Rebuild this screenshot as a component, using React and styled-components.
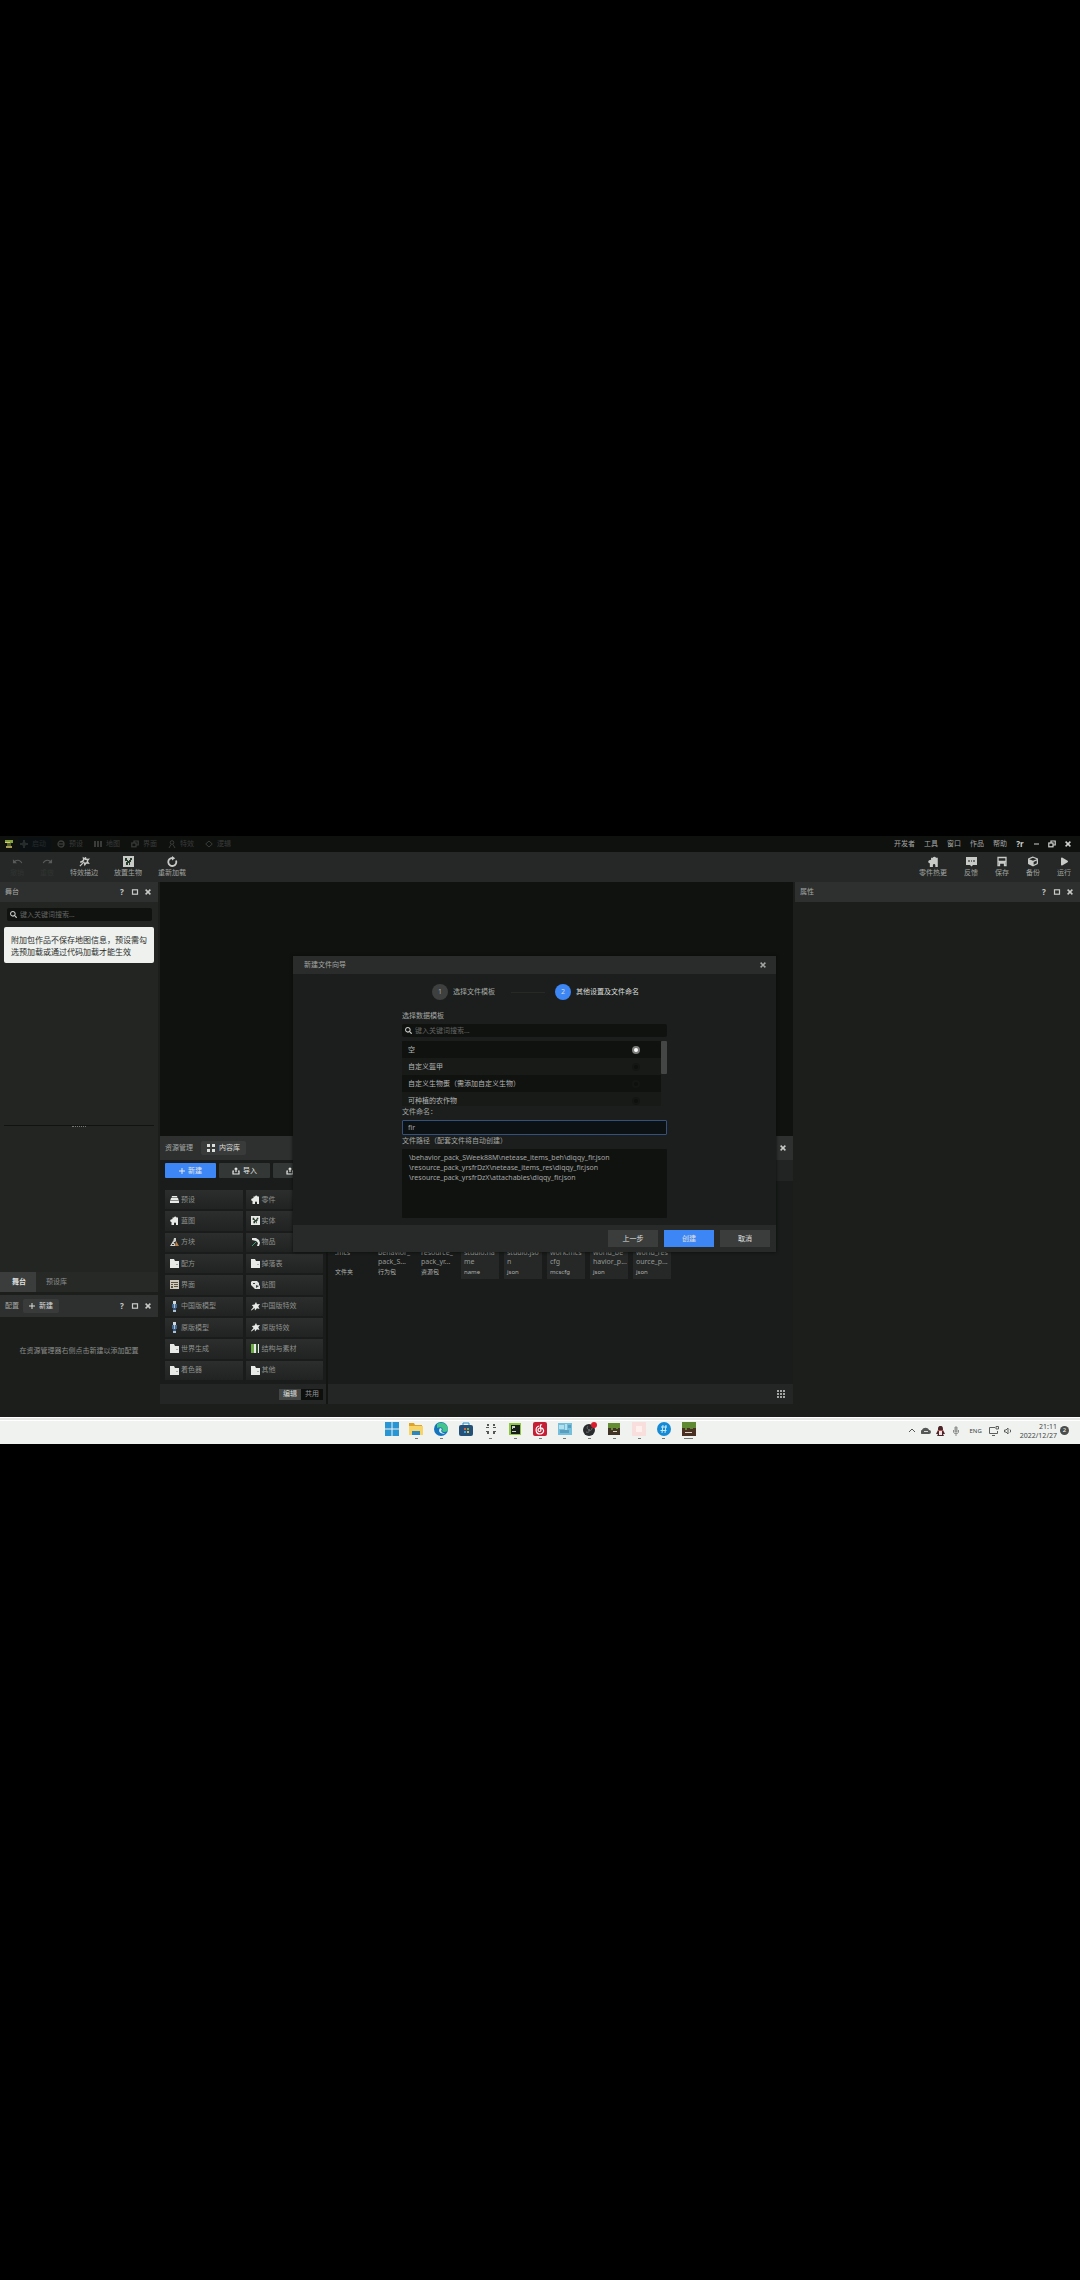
import React, { useState } from "react";
import styled, { createGlobalStyle } from "styled-components";
import { FaSearch, FaPlay, FaCube } from "react-icons/fa";
import { MdUndo, MdRedo } from "react-icons/md";

const GlobalStyle = createGlobalStyle`
  * {
    box-sizing: border-box;
  }

  body {
    margin: 0;
    background: #000000;
    color: #a4a6a4;
    font-family: "Noto Sans", "Noto Sans CJK SC", sans-serif;
    font-size: 7px;
    line-height: 10px;
  }

  button,
  input,
  textarea {
    margin: 0;
    padding: 0;
    border: 0;
    background: none;
    color: inherit;
    font: inherit;
  }

  svg {
    display: block;
    flex-shrink: 0;
  }
`;

const Page = styled.div`
  display: flex;
  flex-direction: column;
  justify-content: center;
  min-height: 100vh;
`;

const Editor = styled.div`
  position: relative;
  display: flex;
  flex-direction: column;
  padding-bottom: 13px;
  background: #1b1e1b;
`;

const MenuBar = styled.header`
  display: flex;
  justify-content: space-between;
  align-items: center;
  height: 16px;
  padding: 0 8px 0 4px;
  background: #0f110f;
`;

const Modes = styled.nav`
  display: flex;
  align-items: center;
  gap: 5px;
`;

const Mode = styled.button`
  display: flex;
  align-items: center;
  gap: 4px;
  width: 32px;
  height: 14px;
  padding-left: 1px;
  color: ${(props) => (props.$active ? "#262b2c" : "#3a3c3a")};
  background: ${(props) => (props.$active ? "#0b1113" : "transparent")};
  white-space: nowrap;
`;

const Menus = styled.nav`
  display: flex;
  align-items: center;
  gap: 9px;
`;

const MenuButton = styled.button`
  white-space: nowrap;
`;

const WindowButtons = styled.div`
  display: flex;
  align-items: center;
  gap: 8px;
  color: #d0d2d0;
`;

const ToolBar = styled.div`
  display: flex;
  justify-content: space-between;
  height: 30px;
  padding: 4px 9px 0 10px;
  background: #252826;
`;

const ToolGroup = styled.div`
  display: flex;
  gap: ${(props) => props.$gap};
`;

const Tool = styled.button`
  display: flex;
  flex-direction: column;
  align-items: center;
  gap: 1px;
  height: 24px;
  color: ${(props) => (props.$disabled ? "#585b59" : "#c8cac8")};
  white-space: nowrap;

  svg {
    height: 11px;
  }

  span {
    color: ${(props) => (props.$disabled ? "#303331" : "#a0a2a0")};
  }
`;

const Workspace = styled.main`
  display: grid;
  grid-template-columns: 158px 1fr 285px;
  gap: 2px;
  height: 522px;
`;

const Column = styled.section`
  display: flex;
  flex-direction: column;
  min-width: 0;
  min-height: 0;
`;

const PanelHeader = styled.div`
  display: flex;
  align-items: center;
  gap: ${(props) => props.$gap || "4px"};
  height: ${(props) => props.$height || "20px"};
  padding: 0 6px 0 5px;
  background: #2d302e;
`;

const PanelTools = styled.div`
  display: flex;
  align-items: center;
  gap: 5px;
  margin-left: auto;
  color: #c8cac8;
`;

const IconButton = styled.button`
  display: flex;
  align-items: center;
  justify-content: center;
  width: 8px;
  height: 10px;
  font-weight: 700;
  font-size: 8px;
`;

const StagePanel = styled.div`
  flex: 1;
  display: flex;
  flex-direction: column;
  padding: 6px 4px 0;
  background: #222522;
`;

const SearchBox = styled.label`
  display: flex;
  align-items: center;
  gap: 3px;
  height: 13px;
  margin: ${(props) => props.$margin || "0"};
  padding: 0 3px;
  border-radius: 2px;
  background: #101210;
  color: #c8cac8;

  input {
    flex: 1;
    min-width: 0;
    outline: none;
  }

  input::placeholder {
    color: #626462;
  }
`;

const Note = styled.p`
  height: 36px;
  margin: 6px 0 0;
  padding: 7px;
  border-radius: 2px;
  background: #eef1ee;
  color: #2a2c2a;
  font-size: 8px;
  line-height: 12px;
`;

const Splitter = styled.div`
  display: flex;
  justify-content: center;
  margin-top: 162px;
  border-top: 1px solid #111311;
  height: 4px;

  span {
    width: 14px;
    height: 1px;
    border-top: 1px dotted #777977;
  }
`;

const TabRow = styled.div`
  display: flex;
  height: 20px;
  margin-bottom: 3px;
  background: #262926;
`;

const Tab = styled.button`
  min-width: 36px;
  padding: 0 10px;
  background: ${(props) => (props.$active ? "#3a3d3b" : "transparent")};
  color: ${(props) => (props.$active ? "#e0e2e0" : "#8c8e8c")};
  font-weight: ${(props) => (props.$active ? 600 : 400)};
  text-align: right;
  white-space: nowrap;
`;

const ChipButton = styled.button`
  display: flex;
  align-items: center;
  gap: 4px;
  height: 14px;
  padding: 0 6px;
  border-radius: 2px;
  background: #383b39;
  color: #dcdedc;
  white-space: nowrap;
`;

const ConfigPanel = styled.div`
  display: flex;
  justify-content: center;
  height: 87px;
  padding-top: 29px;
  background: #1b1e1b;
  color: #8c8e8c;
`;

const Viewport = styled.div`
  flex: 1;
  background: #0f120f;
`;

const ResourcePanel = styled.div`
  display: grid;
  grid-template-columns: 168px 1fr;
  height: 244px;
  background: #191c1a;
`;

const Library = styled.div`
  display: flex;
  flex-direction: column;
  border-right: 2px solid #131513;
`;

const ActionRow = styled.div`
  display: flex;
  gap: 3px;
  padding: 3px 0 0 5px;
  overflow: hidden;
`;

const ActionButton = styled.button`
  display: flex;
  align-items: center;
  justify-content: center;
  gap: 3px;
  flex: 0 0 51px;
  height: 15px;
  border-radius: 1px;
  background: ${(props) => (props.$primary ? "#3d86f6" : "#333735")};
  color: #e6e8e6;
`;

const TileGrid = styled.div`
  flex: 1;
  display: grid;
  grid-template-columns: 1fr 1fr;
  grid-auto-rows: 1fr;
  gap: 2px 3px;
  padding: 12px 3px 4px 5px;
`;

const Tile = styled.button`
  display: flex;
  align-items: center;
  gap: 2px;
  padding: 0 5px;
  background: linear-gradient(#2b2e2c, #202321);
  color: #8f918f;
  white-space: nowrap;

  svg {
    color: #e8eae8;
  }
`;

const PanelFooter = styled.div`
  display: flex;
  align-items: center;
  justify-content: flex-end;
  height: 20px;
  padding-right: ${(props) => props.$inset || "3px"};
  background: #232624;
`;

const Toggle = styled.button`
  width: 22px;
  height: 11px;
  background: ${(props) => (props.$active ? "#424543" : "#0d0f0d")};
  color: ${(props) => (props.$active ? "#dcdedc" : "#969896")};
`;

const Files = styled.div`
  display: flex;
  flex-direction: column;
  min-width: 0;
`;

const FilesBar = styled.div`
  height: 21px;
  background: #212422;
`;

const FileList = styled.div`
  flex: 1;
  display: flex;
  align-items: flex-start;
  gap: 5px;
  padding: 20px 4px 0;
`;

const FileCard = styled.div`
  display: flex;
  flex-direction: column;
  width: 38px;
  height: 78px;
  padding: 47px 3px 0;
  background: ${(props) => (props.$filled ? "#252826" : "transparent")};
  color: #969896;

  p {
    height: 18px;
    margin: 0;
    line-height: 9px;
    white-space: pre;
  }

  small {
    font-size: 6px;
    line-height: 12px;
    color: #b0b2b0;
  }
`;

const PropertyPanel = styled.div`
  flex: 1;
  background: #1c1e1c;
`;

const Dialog = styled.form`
  position: absolute;
  top: 120px;
  left: calc(50% - 247px);
  display: flex;
  flex-direction: column;
  width: 483px;
  height: 296px;
  background: #1b1e1c;
  box-shadow: 0 0 3px #0a0c0a;
`;

const DialogHeader = styled.div`
  display: flex;
  align-items: center;
  justify-content: space-between;
  height: 18px;
  padding: 0 9px 0 11px;
  background: #292c2a;
`;

const Steps = styled.ol`
  display: flex;
  align-items: center;
  gap: 5px;
  height: 36px;
  margin: 0;
  padding-left: 139px;
  list-style: none;
`;

const Step = styled.li`
  display: flex;
  align-items: center;
  gap: 5px;
  color: ${(props) => (props.$active ? "#dcdedc" : "#a4a6a4")};

  b {
    width: 16px;
    height: 16px;
    border-radius: 50%;
    background: ${(props) => (props.$active ? "#3d86f6" : "#3d403e")};
    font-weight: 400;
    line-height: 16px;
    text-align: center;
  }
`;

const StepLine = styled.li`
  width: 34px;
  height: 1px;
  margin: 0 5px 0 11px;
  background: #262926;
`;

const Fields = styled.div`
  flex: 1;
  display: flex;
  flex-direction: column;
  width: 265px;
  margin-left: 109px;
`;

const FieldLabel = styled.label`
  height: 12px;
  line-height: 12px;
`;

const Templates = styled.div`
  display: flex;
  justify-content: space-between;
  height: 65px;
  margin-top: 4px;
  overflow: hidden;
`;

const TemplateList = styled.div`
  flex: 1;
`;

const TemplateRow = styled.label`
  display: flex;
  align-items: center;
  justify-content: space-between;
  height: 17px;
  padding: 0 21px 0 6px;
  background: #181a18;
  color: #b4b6b4;

  &:nth-child(odd) {
    background: #101210;
  }

  input {
    appearance: none;
    width: 8px;
    height: 8px;
    border: 2px solid #141614;
    border-radius: 50%;
    background: #0e100e;
  }

  input:checked {
    border-color: #7c7e7c;
    background: #ffffff;
  }
`;

const ScrollThumb = styled.div`
  width: 6px;
  height: 33px;
  border-radius: 1px;
  background: #434644;
`;

const NameInput = styled.input`
  height: 15px;
  margin-top: 2px;
  padding: 0 5px;
  border: 1px solid #33517c;
  border-radius: 1px;
  background: #0c1114;
  outline: none;
`;

const Paths = styled.textarea`
  height: 69px;
  margin-top: 2px;
  padding: 4px 7px;
  border-radius: 1px;
  background: #101210;
  line-height: 10px;
  outline: none;
  overflow: hidden;
  resize: none;
`;

const DialogFooter = styled.div`
  display: flex;
  align-items: center;
  justify-content: flex-end;
  gap: 6px;
  height: 27px;
  padding-right: 6px;
  background: #272a28;
`;

const DialogButton = styled.button`
  width: 50px;
  height: 17px;
  background: ${(props) => (props.$primary ? "#3d86f6" : "#3a3d3b")};
  color: #e0e2e0;
`;

const TaskBar = styled.footer`
  display: grid;
  grid-template-columns: 1fr 311px 1fr;
  align-items: center;
  height: 27px;
  background: #eff2ef;
  box-shadow: inset 0 1px #ffffff, inset 0 3px #e4e7e4, inset 0 4px #ffffff;
  color: #444644;
`;

const Apps = styled.div`
  grid-column: 2;
  display: flex;
  justify-content: space-between;
`;

const AppButton = styled.button`
  display: flex;
  flex-direction: column;
  align-items: center;
  gap: 2px;
  width: 14px;

  &::after {
    content: "";
    width: ${(props) => props.$mark};
    height: 1px;
    background: #777977;
  }
`;

const Tray = styled.div`
  display: flex;
  align-items: center;
  justify-content: flex-end;
  gap: 5px;
  padding-right: 11px;
`;

const Language = styled.span`
  margin: 0 2px;
  font-size: 6px;
`;

const Clock = styled.time`
  margin-left: 3px;
  line-height: 9px;
  text-align: right;
`;

const Badge = styled.span`
  width: 9px;
  height: 9px;
  margin-left: -2px;
  border-radius: 50%;
  background: #4a4d4b;
  color: #ffffff;
  font-size: 6px;
  line-height: 9px;
  text-align: center;
`;

const CloseIcon = () => (
  <svg width="8" height="8" viewBox="0 0 8 8" stroke="currentColor" strokeWidth="1.5">
    <path d="M1.6 1.6 6.4 6.4M6.4 1.6 1.6 6.4" />
  </svg>
);

const SquareIcon = () => (
  <svg width="8" height="8" viewBox="0 0 8 8" fill="none" stroke="currentColor" strokeWidth="1.2">
    <rect x="1.5" y="1.8" width="5" height="4.4" />
  </svg>
);

const RestoreIcon = () => (
  <svg width="8" height="8" viewBox="0 0 8 8" fill="none" stroke="currentColor" strokeWidth="1.2">
    <rect x="0.8" y="3" width="4.2" height="3.8" />
    <path d="M3 3V1h4.2v4H5" />
  </svg>
);

const PlusIcon = () => (
  <svg width="6" height="6" viewBox="0 0 6 6" stroke="currentColor">
    <path d="M3 0v6M0 3h6" />
  </svg>
);

const PlayModeIcon = () => (
  <svg width="8" height="8" viewBox="0 0 8 8" fill="currentColor">
    <path d="M3 0h2v2l1 1h2v2H6L5 6v2H3V6L2 5H0V3h2l1-1z" />
  </svg>
);

const GearIcon = () => (
  <svg width="8" height="8" viewBox="0 0 8 8" fill="none" stroke="currentColor" strokeWidth="1.3">
    <circle cx="4" cy="4" r="3" />
    <path d="M1 4h6" />
  </svg>
);

const MapIcon = () => (
  <svg width="8" height="8" viewBox="0 0 8 8" fill="currentColor">
    <path d="M0 1h2v6H0zM3 1h2v6H3zM6 1h2v6H6z" />
  </svg>
);

const PersonIcon = () => (
  <svg width="8" height="8" viewBox="0 0 8 8" fill="none" stroke="currentColor">
    <circle cx="4" cy="2.500" r="1.800" />
    <path d="M1 8 3 4.500M7 8 5 4.500" />
  </svg>
);

const DiamondIcon = () => (
  <svg width="8" height="8" viewBox="0 0 8 8" fill="none" stroke="currentColor">
    <path d="M4 1 7.300 4 4 7 .7 4z" />
  </svg>
);

const TransferIcon = () => (
  <svg width="8" height="8" viewBox="0 0 8 8" fill="none" stroke="currentColor" strokeWidth="1.2">
    <path d="M4 5V1M2.6 2.4 4 1l1.4 1.4M2 4H1v3h6V4H6" />
  </svg>
);

const SparkIcon = ({ size = 10 }) => (
  <svg width={size} height={size} viewBox="0 0 10 10">
    <path
      fill="none"
      stroke="currentColor"
      strokeWidth="1.2"
      d="m5.800 1.200.6 1.900 2.300-.2-1.300 1.700 1.200 1.900-2.200-.3-1.100 1.700-.8-2.200-2.100-.6 1.800-1.200-.2-2 1.500.9z"
    />
    <path stroke="currentColor" strokeWidth="1.2" d="M3.500 6.500.8 9.200M1 5.500h1.500" />
  </svg>
);

const StarIcon = () => (
  <svg width="9" height="9" viewBox="0 0 9 9" fill="currentColor">
    <path d="m5 0 1 2.300L9 2 7.300 4.300 8.500 7 6 6.300 4 8.500 3.600 6 .5 8.500 0 8l2.500-3L.8 3 3.600 2.500z" />
  </svg>
);

const CreatureIcon = ({ size = 11 }) => (
  <svg width={size} height={size} viewBox="0 0 11 11">
    <path fill="currentColor" d="M0 0h11v11H0z" />
    <path fill="#263b2a" d="M2 2h2v2h1v1h1V4h1V2h2v2H8v2H7v3H6V7H5v2H3V6h1V5H2z" />
  </svg>
);

const RefreshIcon = () => (
  <svg width="11" height="11" viewBox="0 0 11 11">
    <path d="M9 4.500A4 4 0 1 1 5.500 2" fill="none" stroke="currentColor" strokeWidth="1.8" />
    <path d="M5 0v4.400l3.200-2.200z" fill="currentColor" />
  </svg>
);

const SaveIcon = () => (
  <svg width="10" height="10" viewBox="0 0 10 10" fill="none" stroke="currentColor" strokeWidth="1.3">
    <path d="M1 1h8v8H7.5V6.5h-5V9H1zM1 5h8" />
  </svg>
);

const FeedbackIcon = () => (
  <svg width="11" height="11" viewBox="0 0 11 11">
    <path fill="currentColor" d="M0 1h11v8H7l-1.500 1.500L4 9H0z" />
    <path fill="#6e716f" d="M2 4h2v2H2zM5 4h1v2H5zM7 4h2v2H7z" />
  </svg>
);

const GridIcon = () => (
  <svg width="8" height="8" viewBox="0 0 8 8" fill="currentColor">
    <path d="M0 0h3v3H0zM5 0h3v3H5zM0 5h3v3H0zM5 5h3v3H5z" />
  </svg>
);

const SmallGridIcon = () => (
  <svg width="8" height="8" viewBox="0 0 8 8" fill="currentColor">
    <path d="M0 0h2v2H0zM3 0h2v2H3zM6 0h2v2H6zM0 3h2v2H0zM3 3h2v2H3zM6 3h2v2H6zM0 6h2v2H0zM3 6h2v2H3zM6 6h2v2H6z" />
  </svg>
);

const LogoIcon = () => (
  <svg width="10" height="9" viewBox="0 0 10 9">
    <path fill="#86a23a" d="M1 0h8v3H1z" />
    <path fill="#d3cd68" d="M1 2h5v1H1z" />
    <path fill="#51602a" d="M3 3h4v3H3z" />
    <path fill="#a89d58" d="M2 6h6v2H2z" />
  </svg>
);

const PresetIcon = () => (
  <svg width="9" height="9" viewBox="0 0 9 9" fill="currentColor">
    <path d="M2 1h5l.5 1.5h-6zM1 3h7l.6 2H.4zM0 5.5h9V8H0z" />
  </svg>
);

const PieceIcon = ({ size = 9 }) => (
  <svg width={size} height={size} viewBox="0 0 9 9" fill="currentColor">
    <path
      fillRule="evenodd"
      d="M4 1.500a1.300 1.300 0 0 1 2.500 0H8V9H6V7.500a1 1 0 0 0-2 0V9H1.500V6A1.300 1.300 0 0 1 1 3.500L2.500 3V1.500z"
    />
  </svg>
);

const FolderIcon = () => (
  <svg width="9" height="9" viewBox="0 0 9 9">
    <path fill="currentColor" d="M0 0h4l1 2h4v7H0z" />
    <path fill="#a9aba9" d="M6 5h2v1H6z" />
  </svg>
);

const BlockIcon = () => (
  <svg width="9" height="9" viewBox="0 0 9 9">
    <path fill="#cfd1cf" d="M4 0h2v3l-1 1H3zM0 8l3-5 2 3v2z" />
    <path fill="#b9814b" d="m6 3 3 5H5z" />
    <path fill="#333333" d="M2 6h2v1H2z" />
  </svg>
);

const ItemIcon = () => (
  <svg width="9" height="9" viewBox="0 0 9 9">
    <path fill="#e8eae8" d="M1 0h4l3 2 1 3-1 3H6l1-3-2-2-4-1z" />
    <path stroke="#3d9a71" d="M5.5 3.5 1 8" />
  </svg>
);

const ScreenIcon = () => (
  <svg width="9" height="9" viewBox="0 0 9 9">
    <path fill="#cfcabc" d="M0 0h9v9H0z" />
    <path fill="#5a5040" d="M1 2h7v1H1zM1 4h2v1H1zM4 4h4v1H4zM1 6h2v2H1zM4 6h4v1H4z" />
  </svg>
);

const TextureIcon = () => (
  <svg width="9" height="9" viewBox="0 0 9 9">
    <path fill="#e0e2e0" d="M1 1h5l2 2v2l1 1v3H4L0 5V2z" />
    <path fill="#3b3f3c" d="M2 3h2v1H2zM5 5l3 1-3 2z" />
  </svg>
);

const ModelIcon = () => (
  <svg width="9" height="11" viewBox="0 0 9 11">
    <path fill="#d2dade" d="M3 0h3v3H3z" />
    <path fill="#466b92" d="M2 3h5v4H2z" />
    <path fill="#a9c1d2" d="M4 3h1v5H4zM3 9h3v2H3z" />
    <path fill="#38547a" d="M3 7h3v2H3z" />
  </svg>
);

const BookIcon = () => (
  <svg width="9" height="9" viewBox="0 0 9 9">
    <path fill="#6cab46" d="M0 0h3v9H0z" />
    <path fill="#e8eae8" d="M3 0h2v9H3zM7 0h1v9H7z" />
    <path fill="#31502b" d="M5 0h2v9H5z" />
  </svg>
);

const MobIcon = () => <CreatureIcon size={9} />;

const modes = [
  ["启动", PlayModeIcon],
  ["预设", GearIcon],
  ["地图", MapIcon],
  ["界面", RestoreIcon],
  ["特效", PersonIcon],
  ["逻辑", DiamondIcon],
];

const tiles = [
  ["预设", PresetIcon],
  ["零件", PieceIcon],
  ["蓝图", PieceIcon],
  ["实体", MobIcon],
  ["方块", BlockIcon],
  ["物品", ItemIcon],
  ["配方", FolderIcon],
  ["掉落表", FolderIcon],
  ["界面", ScreenIcon],
  ["贴图", TextureIcon],
  ["中国版模型", ModelIcon],
  ["中国版特效", StarIcon],
  ["原版模型", ModelIcon],
  ["原版特效", StarIcon],
  ["世界生成", FolderIcon],
  ["结构与素材", BookIcon],
  ["着色器", FolderIcon],
  ["其他", FolderIcon],
];

const files = [
  { name: ".mcs", type: "文件夹" },
  { name: "behavior_\npack_S...", type: "行为包" },
  { name: "resource_\npack_yr...", type: "资源包" },
  { name: "studio.na\nme", type: "name", filled: true },
  { name: "studio.jso\nn", type: "json", filled: true },
  { name: "work.mcs\ncfg", type: "mcscfg", filled: true },
  { name: "world_be\nhavior_p...", type: "json", filled: true },
  { name: "world_res\nource_p...", type: "json", filled: true },
];

const templates = ["空", "自定义盔甲", "自定义生物蛋（需添加自定义生物）", "可种植的农作物"];

const taskApps = [
  {
    name: "开始",
    mark: "0",
    art: <path fill="#2a95d3" d="M0 0h6.5v6.5H0zM7.5 0H14v6.5H7.5zM0 7.5h6.5V14H0zM7.5 7.5H14V14H7.5z" />,
  },
  {
    name: "文件资源管理器",
    mark: "3px",
    art: (
      <>
        <path fill="#dfa328" d="M0 1h5l1 2h7v4H0z" />
        <path fill="#f8d366" d="M0 4h14v9H0z" />
        <path fill="#2b87bd" d="M3 9h8v4H3z" />
      </>
    ),
  },
  {
    name: "Edge",
    mark: "3px",
    art: (
      <>
        <circle cx="7" cy="7" r="7" fill="#1574bd" />
        <path fill="#43c58a" d="M3 2a7 7 0 0 1 11 5c0 3-4 4-6 2 2-3-1-5-5-3z" />
        <path fill="#dceefa" d="M6 6c-3 4 2 7 6 5-4 1-6-2-4-4z" />
      </>
    ),
  },
  {
    name: "Microsoft Store",
    mark: "0",
    art: (
      <>
        <path fill="none" stroke="#2d91c9" d="M4 4V1h6v3" />
        <rect y="3" width="14" height="11" rx="2" fill="#255078" />
        <path fill="#d6633e" d="M5 6h2v2H5z" />
        <path fill="#89ad45" d="M8 6h2v2H8z" />
        <path fill="#3ca6d8" d="M5 9h2v2H5z" />
        <path fill="#e5bd45" d="M8 9h2v2H8z" />
      </>
    ),
  },
  {
    name: "工具",
    mark: "3px",
    art: <path fill="#555755" d="M3 2h2v2H3zM9 2h2v2H9zM2 5h3v1H2zM9 5h3v1H9zM2 9h3v1H2zM9 9h3v1H9zM3 10h2v2H3zM9 10h2v2H9z" />,
  },
  {
    name: "PyCharm",
    mark: "3px",
    art: (
      <>
        <path fill="#8ec63f" d="M1 1h12v12H1z" />
        <path fill="#172018" d="M3 3h9v9H3z" />
        <path fill="#c8d0c8" d="M4 4h3v2H5v1H4zM4 9h4v1H4z" />
      </>
    ),
  },
  {
    name: "网易云音乐",
    mark: "3px",
    art: (
      <>
        <rect width="14" height="14" rx="2" fill="#c51f35" />
        <path fill="none" stroke="#fff" strokeWidth="1.2" d="M9 3c-2-1-2 1-1 5 0 2-3 2-3 0s3-3 5-1c2 3-1 5-3 5-5 0-5-7-1-8" />
      </>
    ),
  },
  {
    name: "编辑器",
    mark: "3px",
    art: (
      <>
        <path fill="#74bfdc" d="M0 1h14v12H0z" />
        <path fill="#b4e0ee" d="M1 3h5v4H1zM7 2h2v7H7z" />
        <path fill="#5a9dbc" d="M2 8h9v3H2zM10 3h3v3h-3z" />
      </>
    ),
  },
  {
    name: "OBS",
    mark: "3px",
    art: (
      <>
        <circle cx="6" cy="8" r="6" fill="#292b2c" />
        <path fill="none" stroke="#6b6d6e" d="M5 4c-2 2 0 4 2 4M9 6c0 3-3 3-4 2M3 10c3 1 4-1 3-3" />
        <circle cx="11" cy="3" r="3" fill="#dc1c2e" />
      </>
    ),
  },
  {
    name: "我的世界",
    mark: "3px",
    art: (
      <>
        <path fill="#413326" d="M1 1h12v12H1z" />
        <path fill="#648d34" d="M1 1h12v5h-2v1H9V6H6v2H4V6H1z" />
        <path fill="#d4cfba" d="M6 9h4v1H6z" />
      </>
    ),
  },
  {
    name: "画板",
    mark: "3px",
    art: (
      <>
        <path fill="#f9dede" d="M0 0h14v14H0z" />
        <path fill="#fff0ee" d="M4 4h6v6H4z" />
      </>
    ),
  },
  {
    name: "启动器",
    mark: "3px",
    art: (
      <>
        <circle cx="7" cy="7" r="7" fill="#168bd5" />
        <path fill="none" stroke="#c6eaff" d="M4 5h6M3.5 8.5h6M6 3 5 11M9 3l-1 8" />
      </>
    ),
  },
  {
    name: "MC Studio",
    mark: "9px",
    art: (
      <>
        <path fill="#4a3022" d="M0 0h14v14H0z" />
        <path fill="#5f8a33" d="M0 0h14v6h-3v1H8V6H5v2H3V6H0z" />
        <path fill="#dcd4c6" d="M3 10h7v1H3z" />
      </>
    ),
  },
];

const PanelControls = () => (
  <PanelTools>
    <IconButton type="button" aria-label="帮助">?</IconButton>
    <IconButton type="button" aria-label="最大化"><SquareIcon /></IconButton>
    <IconButton type="button" aria-label="关闭"><CloseIcon /></IconButton>
  </PanelTools>
);

const NewFileDialog = () => {
  const [template, setTemplate] = useState(templates[0]);
  const [name, setName] = useState("fir");
  const paths = [
    `\\behavior_pack_SWeek88M\\netease_items_beh\\diqqy_${name}.json`,
    `\\resource_pack_yrsfrDzX\\netease_items_res\\diqqy_${name}.json`,
    `\\resource_pack_yrsfrDzX\\attachables\\diqqy_${name}.json`,
  ];

  return (
    <Dialog onSubmit={(event) => event.preventDefault()}>
      <DialogHeader>
        新建文件向导
        <IconButton type="button" aria-label="关闭"><CloseIcon /></IconButton>
      </DialogHeader>
      <Steps>
        <Step><b>1</b>选择文件模板</Step>
        <StepLine />
        <Step $active><b>2</b>其他设置及文件命名</Step>
      </Steps>
      <Fields>
        <FieldLabel htmlFor="template-search">选择数据模板</FieldLabel>
        <SearchBox $margin="2px 0 0">
          <FaSearch size={7} />
          <input id="template-search" placeholder="键入关键词搜索..." />
        </SearchBox>
        <Templates>
          <TemplateList>
            {templates.map((item) => (
              <TemplateRow key={item}>
                {item}
                <input
                  type="radio"
                  name="template"
                  checked={template === item}
                  onChange={() => setTemplate(item)}
                />
              </TemplateRow>
            ))}
          </TemplateList>
          <ScrollThumb />
        </Templates>
        <FieldLabel htmlFor="file-name">文件命名：</FieldLabel>
        <NameInput
          id="file-name"
          autoFocus
          value={name}
          onChange={(event) => setName(event.target.value)}
        />
        <FieldLabel htmlFor="file-paths">文件路径（配套文件将自动创建）</FieldLabel>
        <Paths id="file-paths" readOnly value={paths.join("\n")} />
      </Fields>
      <DialogFooter>
        <DialogButton type="button">上一步</DialogButton>
        <DialogButton $primary>创建</DialogButton>
        <DialogButton type="button">取消</DialogButton>
      </DialogFooter>
    </Dialog>
  );
};

const App = () => (
  <Page>
    <GlobalStyle />
    <Editor>
      <MenuBar>
        <Modes>
          <LogoIcon />
          {modes.map(([name, Icon], index) => (
            <Mode key={name} $active={index === 0}>
              <Icon />
              {name}
            </Mode>
          ))}
        </Modes>
        <Menus>
          {["开发者", "工具", "窗口", "作品", "帮助"].map((name) => (
            <MenuButton key={name}>{name}</MenuButton>
          ))}
          <WindowButtons>
            <IconButton>?r</IconButton>
            <IconButton aria-label="最小化">
              <svg width="8" height="8" viewBox="0 0 8 8" fill="currentColor">
                <path d="M2 3.5h5v1H2z" />
              </svg>
            </IconButton>
            <IconButton aria-label="还原"><RestoreIcon /></IconButton>
            <IconButton aria-label="关闭"><CloseIcon /></IconButton>
          </WindowButtons>
        </Menus>
      </MenuBar>
      <ToolBar>
        <ToolGroup $gap="16px">
          <Tool $disabled><MdUndo size={11} /><span>撤销</span></Tool>
          <Tool $disabled><MdRedo size={11} /><span>重做</span></Tool>
          <Tool><SparkIcon size={11} /><span>特效描边</span></Tool>
          <Tool><CreatureIcon /><span>放置生物</span></Tool>
          <Tool><RefreshIcon /><span>重新加载</span></Tool>
        </ToolGroup>
        <ToolGroup $gap="17px">
          <Tool><PieceIcon size={11} /><span>零件热更</span></Tool>
          <Tool><FeedbackIcon /><span>反馈</span></Tool>
          <Tool><SaveIcon /><span>保存</span></Tool>
          <Tool><FaCube size={10} /><span>备份</span></Tool>
          <Tool><FaPlay size={7} /><span>运行</span></Tool>
        </ToolGroup>
      </ToolBar>
      <Workspace>
        <Column>
          <PanelHeader>舞台<PanelControls /></PanelHeader>
          <StagePanel>
            <SearchBox $margin="0 2px 0 3px">
              <FaSearch size={7} />
              <input aria-label="搜索" placeholder="键入关键词搜索..." />
            </SearchBox>
            <Note>附加包作品不保存地图信息，预设需勾选预加载或通过代码加载才能生效</Note>
            <Splitter><span /></Splitter>
          </StagePanel>
          <TabRow>
            <Tab $active>舞台</Tab>
            <Tab>预设库</Tab>
          </TabRow>
          <PanelHeader $height="22px">
            配置
            <ChipButton><PlusIcon />新建</ChipButton>
            <PanelControls />
          </PanelHeader>
          <ConfigPanel>在资源管理器右侧点击新建以添加配置</ConfigPanel>
        </Column>
        <Column>
          <Viewport />
          <PanelHeader $height="24px" $gap="8px">
            资源管理
            <ChipButton><GridIcon />内容库</ChipButton>
            <PanelControls />
          </PanelHeader>
          <ResourcePanel>
            <Library>
              <ActionRow>
                <ActionButton $primary><PlusIcon />新建</ActionButton>
                <ActionButton><TransferIcon />导入</ActionButton>
                <ActionButton><TransferIcon />导出</ActionButton>
              </ActionRow>
              <TileGrid>
                {tiles.map(([name, Icon]) => (
                  <Tile key={name}>
                    <Icon />
                    {name}
                  </Tile>
                ))}
              </TileGrid>
              <PanelFooter>
                <Toggle $active>编辑</Toggle>
                <Toggle>共用</Toggle>
              </PanelFooter>
            </Library>
            <Files>
              <FilesBar />
              <FileList>
                {files.map((file) => (
                  <FileCard key={file.name} $filled={file.filled}>
                    <p>{file.name}</p>
                    <small>{file.type}</small>
                  </FileCard>
                ))}
              </FileList>
              <PanelFooter $inset="8px">
                <IconButton aria-label="网格视图"><SmallGridIcon /></IconButton>
              </PanelFooter>
            </Files>
          </ResourcePanel>
        </Column>
        <Column>
          <PanelHeader>属性<PanelControls /></PanelHeader>
          <PropertyPanel />
        </Column>
      </Workspace>
      <NewFileDialog />
    </Editor>
    <TaskBar>
      <Apps>
        {taskApps.map((app) => (
          <AppButton key={app.name} aria-label={app.name} $mark={app.mark}>
            <svg width="14" height="14" viewBox="0 0 14 14">{app.art}</svg>
          </AppButton>
        ))}
      </Apps>
      <Tray>
        <svg width="8" height="8" viewBox="0 0 8 8" fill="none" stroke="#555">
          <path d="m1 5 3-3 3 3" />
        </svg>
        <svg width="10" height="8" viewBox="0 0 10 8">
          <path fill="#555857" d="M2 7a2 2 0 0 1-1-4c1-3 6-3 7 0a2 2 0 0 1 0 4z" />
          <path fill="#d6d8d6" d="M3 4h4v1H3z" />
        </svg>
        <svg width="9" height="10" viewBox="0 0 9 10">
          <path fill="#4d2529" d="M4.5 0C7 0 7 2 7 4l2 4H7l1 2H1l1-2H0l2-4c0-2 0-4 2.500-4z" />
          <path fill="#ece4e2" d="M3 5h3v4H3z" />
          <path fill="#bb4a48" d="M2 4h5v1H2z" />
        </svg>
        <svg width="12" height="10" viewBox="0 0 12 10" fill="none" stroke="#8d908e">
          <path fill="#aaadab" d="M5 1h2v5H5z" />
          <path d="M3.500 4v2l1 1.500h3l1-1.500V4M6 8v2" />
        </svg>
        <Language>ENG</Language>
        <svg width="10" height="10" viewBox="0 0 10 10" fill="none" stroke="#5c5f5d">
          <path d="M6 1.500H.5v6h8V5M3 9.500h3M7 .5h2.500V3H7z" />
        </svg>
        <svg width="8" height="8" viewBox="0 0 8 8" fill="none" stroke="#5c5f5d">
          <path d="M.5 3h1.500l2-2v6l-2-2H.5zM6 2.500q1.500 1.500 0 3" />
        </svg>
        <Clock>21:11<br />2022/12/27</Clock>
        <Badge>2</Badge>
      </Tray>
    </TaskBar>
  </Page>
);

export default App;
